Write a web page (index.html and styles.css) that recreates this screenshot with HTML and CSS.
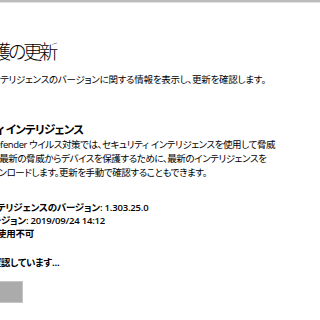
FILE: index.html
```html
<!DOCTYPE html>
<html lang="ja">
<head>
    <meta charset="UTF-8">
    <meta name="viewport" content="width=device-width, initial-scale=1.0">
    <title>保護の更新</title>
    <link rel="stylesheet" href="styles.css">
</head>
<body>
    <div class="window-edge"></div>
    <main class="page">
        <h1 class="title">保護の更新</h1>
        <p class="lead">セキュリティ インテリジェンスのバージョンに関する情報を表示し、更新を確認します。</p>

        <section class="intel">
            <h2 class="intel-title">セキュリティ インテリジェンス</h2>
            <p class="desc">
                <span class="line line-1">Windows Defender ウイルス対策では、セキュリティ インテリジェンスを使用して脅威</span>
                <span class="line line-2">を検出します。最新の脅威からデバイスを保護するために、最新のインテリジェンスを</span>
                <span class="line line-3">自動的にダウンロードします。更新を手動で確認することもできます。</span>
            </p>

            <ul class="info">
                <li class="info-1">セキュリティ インテリジェンスのバージョン: 1.303.25.0</li>
                <li class="info-2">作成されたバージョン: 2019/09/24 14:12</li>
                <li class="info-3">最終更新: 使用不可</li>
            </ul>

            <p class="status">更新を確認しています...</p>
            <button class="check-button" disabled></button>
        </section>
    </main>
</body>
</html>
```

FILE: styles.css
```css
/* General */
html, body {
    margin: 0;
    height: 100%;
    overflow: hidden;
    background: #fff;
}
body {
    font-family: "Open Sans", "Noto Sans CJK JP", sans-serif;
    font-feature-settings: "palt";
    color: #000;
}

/* Window frame edge */
.window-edge {
    height: 2px;
    background: #bdbdbd;
    border-bottom: 1px solid #e0e0e0;
}

.page {
    display: flex;
    flex-direction: column;
    align-items: flex-start;
    white-space: nowrap;
}

/* Header */
.title {
    margin: 39px 0 0 -24px;
    font-size: 19px;
    line-height: 20px;
    font-weight: 300;
    letter-spacing: -3px;
}
.lead {
    margin: 12px 0 0 -66px;
    font-size: 9.5px;
    line-height: 12px;
    letter-spacing: -0.25px;
}

/* Security intelligence */
.intel {
    display: flex;
    flex-direction: column;
    align-items: flex-start;
}
.intel-title {
    margin: 36px 0 0 -52px;
    font-size: 11.5px;
    line-height: 16px;
    font-weight: 700;
    letter-spacing: -0.8px;
}
.desc {
    margin: 0;
    font-size: 9.5px;
    line-height: 14px;
    letter-spacing: -0.4px;
}
.line {
    display: block;
}
.line-1 { margin-left: -51px; }
.line-2 { margin-left: -55px; }
.line-3 { margin-left: -54px; }

.info {
    list-style: none;
    margin: 21px 0 0;
    padding: 0;
    font-size: 9.5px;
    line-height: 13px;
    font-weight: 600;
    letter-spacing: -0.2px;
}
.info-1 { margin-left: -71px; }
.info-2 { margin-left: -62px; }
.info-3 { margin-left: -45px; }

.status {
    margin: 16px 0 0 -36px;
    font-size: 9.5px;
    line-height: 13px;
    font-weight: 700;
    letter-spacing: -0.2px;
}

.check-button {
    width: 23px;
    height: 22px;
    margin-top: 12px;
    padding: 0;
    background: #ababab;
    border: 1px solid #c6c6c6;
    border-left: none;
}
```
